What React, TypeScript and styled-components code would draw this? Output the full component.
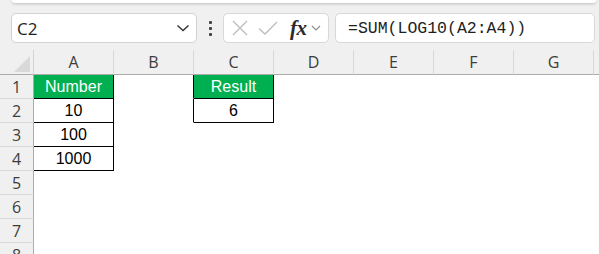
import React from "react";
import styled, { createGlobalStyle } from "styled-components";

const Global = createGlobalStyle`
  html, body { margin: 0; padding: 0; }
  body {
    background: #f0f0f0;
    width: 599px;
    height: 254px;
    overflow: hidden;
    font-family: "Open Sans", "Noto Sans", sans-serif;
  }
`;

const Page = styled.div`
  display: flex;
  flex-direction: column;
  width: 599px;
  height: 254px;
  overflow: hidden;
  & > * { flex-shrink: 0; }
`;

const Ribbon = styled.div`
  height: 3px;
  margin: 0 3px 0 12px;
  background: #ffffff;
  border-radius: 0 0 8px 8px;
  box-shadow: 0 1px 3px rgba(0, 0, 0, 0.22);
`;

const FormulaBar = styled.div`
  display: flex;
  align-items: center;
  height: 30px;
  margin: 10px 0 7px;
  padding-left: 11px;
`;

const NameBox = styled.div`
  box-sizing: border-box;
  width: 186px;
  height: 30px;
  background: #fff;
  border: 1px solid #d2d2d2;
  border-radius: 5px;
  display: flex;
  align-items: center;
  justify-content: space-between;
  padding: 0 6px 0 5px;
  font-size: 17px;
  color: #1e1e1e;
`;

const Dots = styled.div`
  width: 26px;
  display: flex;
  flex-direction: column;
  align-items: center;
  gap: 3px;
  span {
    width: 3px;
    height: 3px;
    background: #424242;
    border-radius: 1px;
  }
`;

const IconBox = styled.div`
  box-sizing: border-box;
  width: 106px;
  height: 30px;
  background: #fff;
  border: 1px solid #d8d8d8;
  border-radius: 5px;
  display: flex;
  align-items: center;
  padding-left: 8px;
  gap: 10px;
`;

const Fx = styled.span`
  font-family: "Liberation Serif", "DejaVu Serif", serif;
  font-style: italic;
  font-weight: bold;
  font-size: 21px;
  color: #2a2a2a;
  margin-left: 2px;
  letter-spacing: -0.5px;
  line-height: 1;
`;

const FormulaBox = styled.div`
  box-sizing: border-box;
  width: 260px;
  height: 30px;
  margin-left: 6px;
  background: #fff;
  border: 1px solid #d8d8d8;
  border-radius: 5px;
  display: flex;
  align-items: center;
  padding-left: 12px;
  font-family: "Liberation Mono", "DejaVu Sans Mono", monospace;
  font-size: 16.5px;
  color: #1e1e1e;
`;

const Sheet = styled.div`
  display: flex;
  flex-direction: column;
  background: #ffffff;
  flex: 1 1 auto;
  min-height: 0;
  overflow: hidden;
`;

const Row = styled.div<{ $head?: boolean }>`
  display: flex;
  height: ${(p) => (p.$head ? 25 : 24)}px;
  flex-shrink: 0;
  background: ${(p) => (p.$head ? "#f0f0f0" : "#ffffff")};
`;

const Corner = styled.div`
  box-sizing: border-box;
  position: relative;
  width: 34px;
  flex-shrink: 0;
  border-right: 1px solid #d4d4d4;
  border-bottom: 1px solid #ababab;
  svg {
    position: absolute;
    right: 3px;
    bottom: 2px;
  }
`;

const ColHead = styled.div`
  box-sizing: border-box;
  width: 80px;
  flex-shrink: 0;
  border-right: 1px solid #d8d8d8;
  border-bottom: 1px solid #ababab;
  display: flex;
  align-items: center;
  justify-content: center;
  font-size: 16px;
  color: #3d3d3d;
`;

const RowHead = styled.div`
  box-sizing: border-box;
  width: 34px;
  flex-shrink: 0;
  background: #f0f0f0;
  border-right: 1px solid #ababab;
  border-bottom: 1px solid #d8d8d8;
  display: flex;
  align-items: center;
  justify-content: center;
  font-size: 16px;
  color: #3d3d3d;
`;

const Cell = styled.div<{ $right?: boolean; $bottom?: boolean; $fill?: boolean }>`
  box-sizing: border-box;
  width: 80px;
  flex-shrink: 0;
  border-right: 1px solid ${(p) => (p.$right ? "#000" : "transparent")};
  border-bottom: 1px solid ${(p) => (p.$bottom ? "#000" : "transparent")};
  background: ${(p) => (p.$fill ? "#00b050" : "transparent")};
  color: ${(p) => (p.$fill ? "#ffffff" : "#000000")};
  display: flex;
  align-items: center;
  justify-content: center;
  font-family: "Liberation Sans", Arial, sans-serif;
  font-size: 16px;
`;

const cols = ["A", "B", "C", "D", "E", "F", "G", ""];

type CellDef = { t?: string; r?: boolean; b?: boolean; f?: boolean };

const data: Record<number, Record<string, CellDef>> = {
  1: {
    A: { t: "Number", r: true, b: true, f: true },
    B: { r: true },
    C: { t: "Result", r: true, b: true, f: true },
  },
  2: {
    A: { t: "10", r: true, b: true },
    B: { r: true },
    C: { t: "6", r: true, b: true },
  },
  3: { A: { t: "100", r: true, b: true } },
  4: { A: { t: "1000", r: true, b: true } },
};

const Chevron = () => (
  <svg width="14" height="8" viewBox="0 0 14 8" fill="none">
    <path d="M1.5 1.5 L7 6.5 L12.5 1.5" stroke="#333" strokeWidth="1.4" />
  </svg>
);

export default function App() {
  return (
    <>
      <Global />
      <Page>
        <Ribbon />
        <FormulaBar>
          <NameBox>
            <span>C2</span>
            <Chevron />
          </NameBox>
          <Dots>
            <span />
            <span />
            <span />
          </Dots>
          <IconBox>
            <svg width="16" height="16" viewBox="0 0 16 16">
              <path d="M1 1 L15 15 M15 1 L1 15" stroke="#bdbdbd" strokeWidth="1.4" />
            </svg>
            <svg width="20" height="16" viewBox="0 0 20 16">
              <path d="M1 8.5 L7 14 L19 2" stroke="#bdbdbd" strokeWidth="1.4" fill="none" />
            </svg>
            <Fx>fx</Fx>
            <svg width="10" height="6" viewBox="0 0 10 6" style={{ marginLeft: -6 }}>
              <path d="M1 1 L5 5 L9 1" stroke="#8a8a8a" strokeWidth="1.1" fill="none" />
            </svg>
          </IconBox>
          <FormulaBox>=SUM(LOG10(A2:A4))</FormulaBox>
        </FormulaBar>
        <Sheet>
          <Row $head>
            <Corner>
              <svg width="16" height="16" viewBox="0 0 16 16">
                <path d="M16 0 L16 16 L0 16 Z" fill="#d9d9d9" />
              </svg>
            </Corner>
            {cols.map((c, i) => (
              <ColHead key={i}>{c}</ColHead>
            ))}
          </Row>
          {[1, 2, 3, 4, 5, 6, 7, 8].map((r) => (
            <Row key={r}>
              <RowHead>{r}</RowHead>
              {cols.map((c, i) => {
                const d = data[r]?.[c] ?? {};
                return (
                  <Cell key={i} $right={d.r} $bottom={d.b} $fill={d.f}>
                    {d.t}
                  </Cell>
                );
              })}
            </Row>
          ))}
        </Sheet>
      </Page>
    </>
  );
}
